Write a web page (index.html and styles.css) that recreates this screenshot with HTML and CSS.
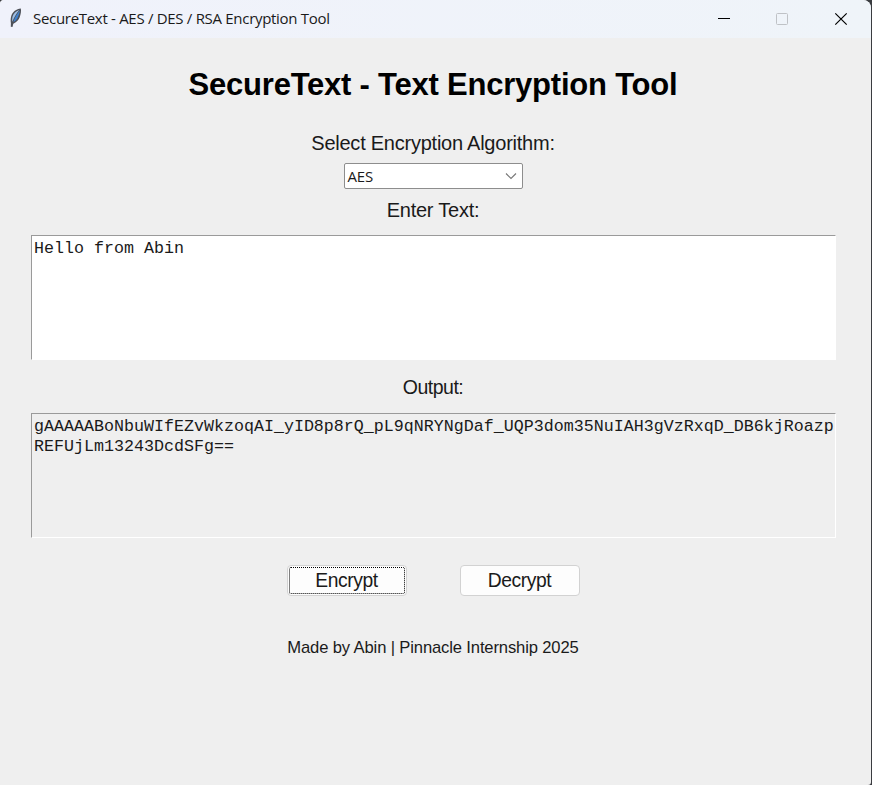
FILE: index.html
```html
<!DOCTYPE html>
<html lang="en">
<head>
<meta charset="utf-8">
<title>SecureText - AES / DES / RSA Encryption Tool</title>
<link rel="stylesheet" href="styles.css">
</head>
<body>
<div class="window">
  <header class="titlebar">
    <svg class="feather" viewBox="0 0 16 20" width="16" height="20">
      <path d="M12.800.600C8.500.800 4.300 4 3.100 8.500c-.6 2.500-.5 4.900-.2 6.500l-.1 3.700 1.700.2.800-3.200c3-1.200 5.400-3.500 6.400-6.400 1-3 1.700-5.900 1.100-8.700z" fill="#4e5158"/>
      <path d="M11.400 2C8.200 3 5.300 5.500 4.500 8.700c-.5 2-.4 3.500-.1 5C6 9.500 8.500 5 11.400 2z" fill="#9dbfe6"/>
      <path d="M11.700 2.500C9 6 6.500 10 5.300 14c2.200-.8 3.800-2.500 4.600-4.900.8-2.400 1.900-4.200 1.800-6.600z" fill="#3f80cc"/>
    </svg>
    <span class="caption">SecureText - AES / DES / RSA Encryption Tool</span>
    <div class="controls">
      <svg viewBox="0 0 16 16" width="16" height="16"><path d="M3 7.500h12" stroke="#000"/></svg>
      <svg viewBox="0 0 16 16" width="16" height="16"><rect x="2.500" y="2.500" width="11" height="11" rx="1" fill="none" stroke="#bfc2c6"/></svg>
      <svg viewBox="0 0 16 16" width="16" height="16"><path d="M2.300 2.300l11.400 11.400M13.700 2.300L2.300 13.700" stroke="#000" stroke-width="1.200"/></svg>
    </div>
  </header>
  <main class="content">
    <h1>SecureText - Text Encryption Tool</h1>
    <div class="label algo">Select Encryption Algorithm:</div>
    <div class="combo">AES
      <svg viewBox="0 0 12 8" width="12" height="8"><path d="M1 1.500l5 5 5-5" fill="none" stroke="#777" stroke-width="1.100"/></svg>
    </div>
    <div class="label enter">Enter Text:</div>
    <div class="field input">Hello from Abin</div>
    <div class="label out">Output:</div>
    <div class="field output">gAAAAABoNbuWIfEZvWkzoqAI_yID8p8rQ_pL9qNRYNgDaf_UQP3dom35NuIAH3gVzRxqD_DB6kjRoazpREFUjLm13243DcdSFg==</div>
    <div class="actions">
      <button class="btn focused">Encrypt</button>
      <button class="btn">Decrypt</button>
    </div>
    <footer>Made by Abin | Pinnacle Internship 2025</footer>
  </main>
</div>
</body>
</html>
```
FILE: styles.css
```css
* { box-sizing: border-box; }
body {
  margin: 0;
  height: 785px;
  overflow: hidden;
  background: #3a3c40;
  font-family: "Liberation Sans", Arial, sans-serif;
  color: #1a1a1a;
}
.window {
  width: 871px;
  height: 785px;
  background: #efefef;
  border-radius: 4px 8px 3px 0;
  overflow: hidden;
}
.titlebar {
  display: flex;
  align-items: center;
  height: 38px;
  padding: 0 22px 0 8px;
  background: linear-gradient(90deg, #f0f2fb, #eff4f9);
}
.feather { margin: -3px 9px 0 0; }
.caption {
  margin-top: -2px;
  font: 15px/20px "Open Sans", "Noto Sans", sans-serif;
  letter-spacing: -0.3px;
  white-space: nowrap;
}
.controls { display: flex; gap: 43px; margin-left: auto; }
.controls svg { display: block; }
.content {
  display: flex;
  flex-direction: column;
  align-items: center;
  padding-right: 5px;
}
h1 {
  margin: 28px 0 0;
  font-size: 31px;
  line-height: 37px;
  font-weight: bold;
  letter-spacing: -0.22px;
  color: #000;
}
.label { font-size: 20px; line-height: 24px; letter-spacing: -0.24px; }
.algo { margin-top: 28px; }
.combo {
  display: flex;
  align-items: center;
  justify-content: space-between;
  width: 179px;
  height: 26px;
  margin: 8px 0 0;
  padding: 0 5px 0 3px;
  border: 1px solid #8d8d8d;
  border-radius: 2px;
  background: #fff;
  font: 15px/20px "Open Sans", sans-serif;
  letter-spacing: -0.2px;
}
.enter { margin-top: 9px; }
.field {
  width: 805px;
  height: 125px;
  margin-left: 1px;
  padding: 3px 0 0 2px;
  border: 1px solid #fff;
  border-top-color: #9a9a9a;
  border-left-color: #9a9a9a;
  font: 16.664px/20px "Liberation Mono", "Courier New", monospace;
  word-break: break-all;
}
.input { margin-top: 13px; background: #fff; }
.out { margin-top: 15px; font-size: 19.5px; letter-spacing: -0.5px; }
.output { margin-top: 14px; }
.actions { display: flex; gap: 53px; margin-top: 27px; }
.btn {
  width: 120px;
  height: 31px;
  padding: 0;
  border: 1px solid #d2d2d2;
  border-radius: 4px;
  background: #fdfdfd;
  font: 19.3px/28px "Liberation Sans", sans-serif;
  letter-spacing: -0.4px;
  color: #1a1a1a;
}
.focused { outline: 1px dotted #000; outline-offset: -3px; }
footer { margin-top: 42px; font-size: 16.6px; line-height: 20px; letter-spacing: -0.14px; }
```
